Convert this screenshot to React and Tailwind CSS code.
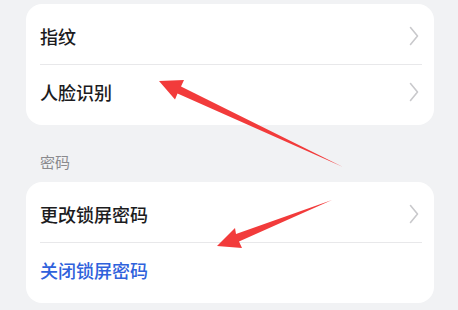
import React from "react";

const Chevron = () => (
  <svg width="10" height="20" viewBox="0 0 10 20" className="shrink-0">
    <path d="M1.5 1.5 L8.5 10 L1.5 18.5" fill="none" stroke="#c9c9cc" strokeWidth="1.6" strokeLinecap="round" strokeLinejoin="round" />
  </svg>
);

const Row = ({ label, chevron = true, blue = false, first = false }) => (
  <div className={`h-[60px] flex items-center justify-between pl-[14px] pr-[15px] ${first ? "pt-[4px]" : "pb-[6px]"}`}>
    <span className={`text-[18px] leading-none font-medium ${blue ? "text-[#2f62dc]" : "text-[#1c1c1e]"}`}>{label}</span>
    {chevron && <Chevron />}
  </div>
);

const Sep = () => <div className="ml-[14px] mr-[12px] h-px bg-[#e8e8ea]" />;

export default function App() {
  return (
    <div
      className="relative w-[458px] h-[310px] overflow-hidden bg-[#f1f2f4] pt-[4px] pl-[26px] pr-[24px]"
      style={{ fontFamily: '"Noto Sans CJK SC", "Noto Sans", sans-serif' }}
    >
      <div className="bg-white rounded-[16px] overflow-hidden">
        <Row label="指纹" first />
        <Sep />
        <Row label="人脸识别" />
      </div>
      <div className="h-[57px] flex items-center pl-[14px] pt-[16px]">
        <span className="text-[15px] leading-none text-[#8a8a8e]">密码</span>
      </div>
      <div className="bg-white rounded-[16px] overflow-hidden">
        <Row label="更改锁屏密码" first />
        <Sep />
        <Row label="关闭锁屏密码" chevron={false} blue />
      </div>
      <svg className="absolute left-0 top-0 pointer-events-none" width="458" height="310" viewBox="0 0 458 310">
        <polygon points="159,81 184,80 181,86.5 343,167 177.5,93.5 175,99.5" fill="#f23b3b" />
        <polygon points="217,246 235,228 236,234 332,200 239,241.5 242,248" fill="#f23b3b" />
      </svg>
    </div>
  );
}
